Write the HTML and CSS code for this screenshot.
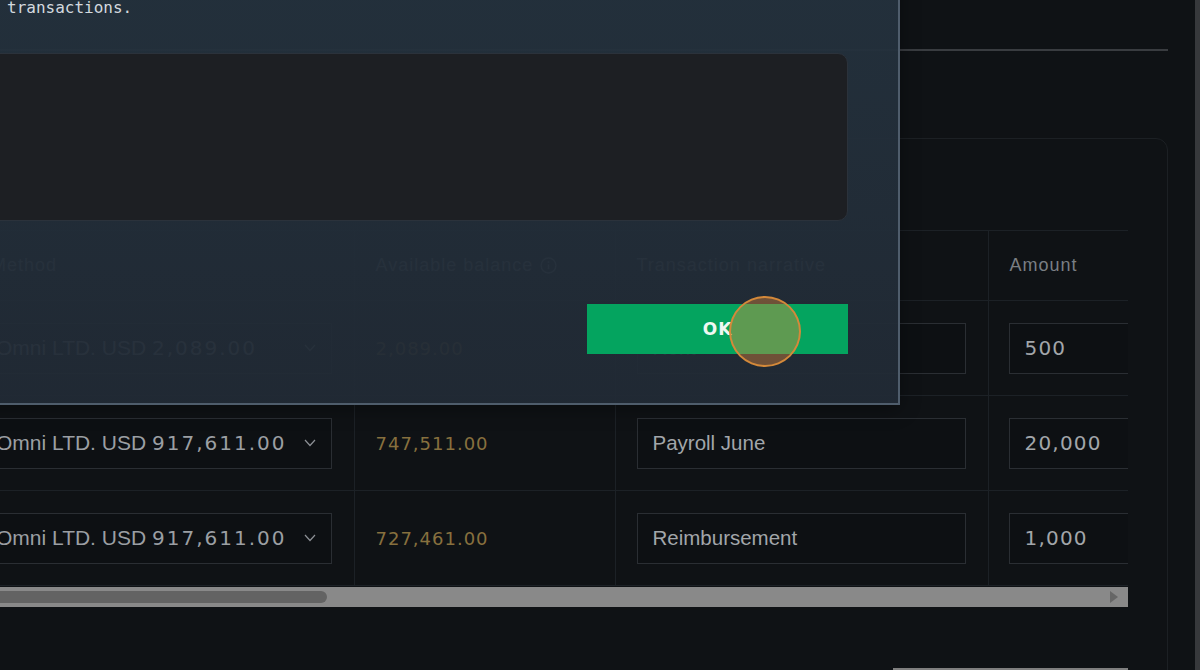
FILE: index.html
```html
<!DOCTYPE html>
<html lang="en">
<head>
<meta charset="utf-8">
<title>Transfers</title>
<link rel="stylesheet" href="styles.css">
</head>
<body>
<div class="page">
  <main class="main">
    <div class="divider"></div>
    <section class="card">
      <div class="table-wrap">
        <table class="grid">
          <colgroup>
            <col class="c-a"><col class="c-b"><col class="c-c"><col class="c-d">
          </colgroup>
          <thead>
            <tr>
              <th class="th-first">Method</th>
              <th><span class="th-info">Available balance
                <svg class="info" viewBox="0 0 16 16" width="17" height="17"><circle cx="8" cy="8" r="7" fill="none" stroke="currentColor" stroke-width="1.3"/><line x1="8" y1="7" x2="8" y2="11.5" stroke="currentColor" stroke-width="1.4"/><circle cx="8" cy="4.8" r="0.9" fill="currentColor"/></svg></span></th>
              <th>Transaction narrative</th>
              <th class="th-last">Amount</th>
            </tr>
          </thead>
          <tbody>
            <tr>
              <td><div class="select"><span>Omni LTD. USD <span class="num">2,089.00</span></span><svg class="chev" viewBox="0 0 12 8" width="12" height="8"><polyline points="1,1 6,6.5 11,1" fill="none" stroke="currentColor" stroke-width="1.2"/></svg></div></td>
              <td><span class="bal">2,089.00</span></td>
              <td><div class="field">Rent</div></td>
              <td class="td-last"><div class="field"><span class="num">500</span></div></td>
            </tr>
            <tr>
              <td><div class="select"><span>Omni LTD. USD <span class="num">917,611.00</span></span><svg class="chev" viewBox="0 0 12 8" width="12" height="8"><polyline points="1,1 6,6.5 11,1" fill="none" stroke="currentColor" stroke-width="1.2"/></svg></div></td>
              <td><span class="bal">747,511.00</span></td>
              <td><div class="field">Payroll June</div></td>
              <td class="td-last"><div class="field"><span class="num">20,000</span></div></td>
            </tr>
            <tr>
              <td><div class="select"><span>Omni LTD. USD <span class="num">917,611.00</span></span><svg class="chev" viewBox="0 0 12 8" width="12" height="8"><polyline points="1,1 6,6.5 11,1" fill="none" stroke="currentColor" stroke-width="1.2"/></svg></div></td>
              <td><span class="bal">727,461.00</span></td>
              <td><div class="field">Reimbursement</div></td>
              <td class="td-last"><div class="field"><span class="num">1,000</span></div></td>
            </tr>
          </tbody>
        </table>
      </div>
      <div class="hscroll">
        <div class="thumb"></div>
        <div class="arrow"></div>
      </div>
      <div class="footer-bar"></div>
    </section>
  </main>
  <div class="rail"></div>
</div>

<div class="modal">
  <p class="modal-text">Please review the details below before submitting these<br>transactions.</p>
  <div class="notes"></div>
  <div class="actions">
    <button class="ok">OK</button>
  </div>
</div>

<div class="cursor"></div>
</body>
</html>
```
FILE: styles.css
```css
* { box-sizing: border-box; }
html, body { margin: 0; }
body {
  width: 1200px;
  height: 670px;
  overflow: hidden;
  position: relative;
  background: #0f1215;
  font-family: "Liberation Sans", Arial, sans-serif;
}
.page {
  display: flex;
  height: 670px;
}
.main {
  flex: 1;
  min-width: 0;
  margin-left: -66px;
  padding: 49px 27px 0 0;
  display: flex;
  flex-direction: column;
}
.divider {
  height: 2px;
  background: #393c40;
  flex: none;
}
.card {
  flex: none;
  margin-top: 87px;
  height: 700px;
  border: 1px solid #1c2024;
  border-radius: 12px;
  padding: 91px 39px 0 24px;
  background: #0f1215;
}
.rail {
  width: 5px;
  flex: none;
  background: #37393c;
}
.table-wrap {
  overflow: hidden;
}
.grid {
  border-collapse: collapse;
  table-layout: fixed;
  width: 1229px;
}
.c-a { width: 395px; }
.c-b { width: 261px; }
.c-c { width: 373px; }
.c-d { width: 200px; }
.grid th, .grid td {
  border-top: 1px solid #1c2126;
  border-left: 1px solid #1c2126;
  padding: 0 22px 0 21px;
  text-align: left;
  vertical-align: middle;
}
.grid th:first-child, .grid td:first-child { border-left: none; }
.grid .td-last { padding-left: 20px; }
.grid .th-first { padding-left: 32px; }
.grid tbody tr:last-child td { border-bottom: 1px solid #1c2126; }
.grid th {
  height: 70px;
  font-weight: normal;
  font-size: 18px;
  letter-spacing: 1px;
  color: #7a7e83;
}
.grid td { height: 95px; }
.th-info {
  display: inline-flex;
  align-items: center;
  gap: 7px;
}
.info { color: #7a7e83; }
.select {
  display: flex;
  align-items: center;
  justify-content: space-between;
  height: 51px;
  border: 1px solid #2a2e33;
  background: #0d1013;
  padding: 0 15px;
  color: #9b9fa3;
  font-size: 21px;
  white-space: nowrap;
}
.chev { color: #8d9196; flex: none; }
.field {
  display: flex;
  align-items: center;
  height: 51px;
  border: 1px solid #2a2e33;
  background: #0d1013;
  padding: 0 15px;
  color: #a2a6aa;
  font-size: 20.5px;
  white-space: nowrap;
}
.num {
  font-family: "DejaVu Sans", sans-serif;
  font-size: 20px;
  letter-spacing: 1.2px;
}
.select .num { font-size: 20px; letter-spacing: 2px; }
.bal {
  font-family: "DejaVu Sans", sans-serif;
  font-size: 18px;
  letter-spacing: 1px;
  color: #87703e;
}
.hscroll {
  margin-top: 1px;
  height: 20px;
  background: #898989;
  display: flex;
  align-items: center;
  padding: 0 10px 0 4px;
}
.thumb {
  width: 364px;
  height: 12px;
  border-radius: 6px;
  background: #636363;
}
.arrow {
  margin-left: auto;
  width: 0;
  height: 0;
  border-top: 6px solid transparent;
  border-bottom: 6px solid transparent;
  border-left: 8px solid #666;
}
.footer-bar {
  margin-top: 61px;
  margin-left: auto;
  width: 235px;
  height: 40px;
  background: #7f7f7f;
}

.modal {
  position: absolute;
  left: -60px;
  top: -52px;
  width: 960px;
  padding: 24px 50px 49px 50px;
  background: linear-gradient(rgba(36, 50, 62, 0.95), rgba(33, 42, 53, 0.95));
  border-right: 2px solid #4f5d6c;
  border-bottom: 2px solid #4f5d6c;
  box-shadow: 0 4px 18px rgba(0, 0, 0, 0.35);
  z-index: 5;
}
.modal-text {
  margin: 0;
  padding-left: 17px;
  font-family: "DejaVu Sans Mono", monospace;
  font-size: 16px;
  line-height: 24px;
  color: #d3d9df;
}
.notes {
  margin-top: 33px;
  height: 168px;
  border: 1px solid #2b323b;
  border-radius: 10px;
  background: #1d1f23;
}
.actions {
  margin-top: 83px;
  display: flex;
  justify-content: flex-end;
}
.ok {
  width: 261px;
  height: 50px;
  border: none;
  background: #04a45f;
  color: #eef8f2;
  font-family: "DejaVu Sans", sans-serif;
  font-weight: bold;
  font-size: 17px;
  letter-spacing: 1px;
}
.cursor {
  position: absolute;
  left: 729px;
  top: 296px;
  width: 72px;
  height: 71px;
  border-radius: 50%;
  border: 2px solid #d4893a;
  background: rgba(230, 140, 60, 0.4);
  z-index: 10;
}
```
